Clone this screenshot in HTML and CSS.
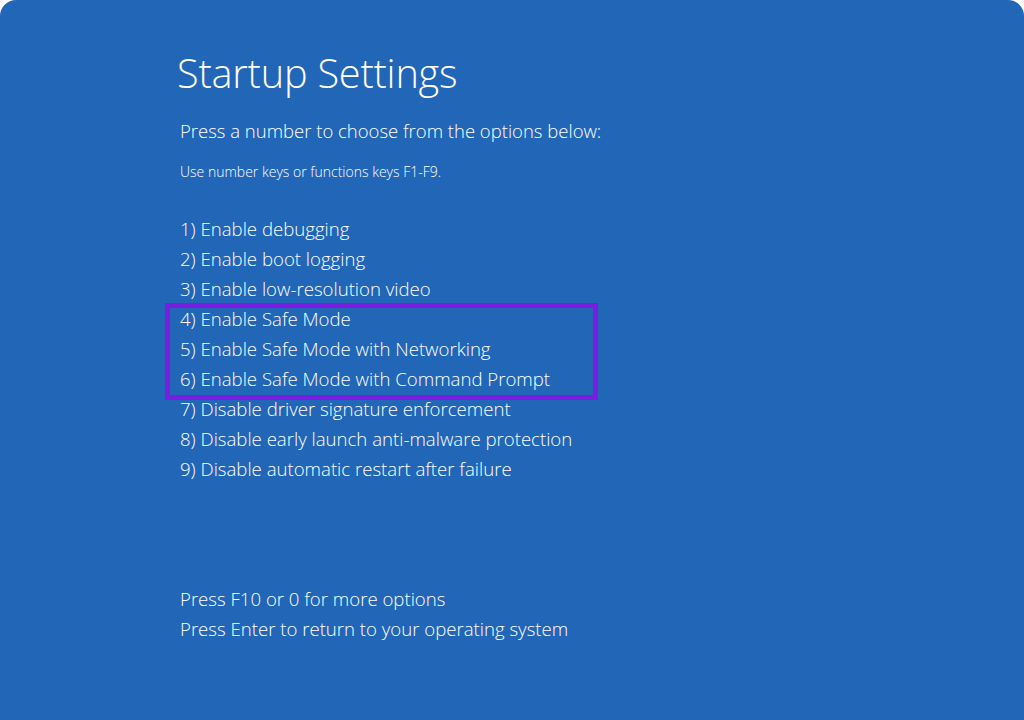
FILE: index.html
```html
<!DOCTYPE html>
<html>
<head>
<meta charset="utf-8">
<link rel="stylesheet" href="styles.css">
</head>
<body>
<div class="screen">
  <h1 class="title">Startup Settings</h1>
  <p class="lead">Press a number to choose from the options below:</p>
  <p class="hint">Use number keys or functions keys F1-F9.</p>
  <ul class="options">
    <li>1) Enable debugging</li>
    <li>2) Enable boot logging</li>
    <li>3) Enable low-resolution video</li>
    <li class="group">
      <ul class="highlight">
        <li>4) Enable Safe Mode</li>
        <li>5) Enable Safe Mode with Networking</li>
        <li>6) Enable Safe Mode with Command Prompt</li>
      </ul>
    </li>
    <li>7) Disable driver signature enforcement</li>
    <li>8) Disable early launch anti-malware protection</li>
    <li>9) Disable automatic restart after failure</li>
  </ul>
  <ul class="footer">
    <li>Press F10 or 0 for more options</li>
    <li>Press Enter to return to your operating system</li>
  </ul>
</div>
</body>
</html>
```

FILE: styles.css
```css
html, body {
  margin: 0;
  padding: 0;
  background: #ffffff;
}
.screen {
  width: 1024px;
  height: 720px;
  box-sizing: border-box;
  background: #2266b8;
  border-radius: 16px 16px 0 0;
  padding: 46px 0 0 177px;
  color: #ffffff;
  font-family: "Open Sans", "Noto Sans", sans-serif;
  font-weight: 300;
  overflow: hidden;
}
.title {
  margin: 0;
  font-size: 39.7px;
  font-weight: 300;
  line-height: 54px;
  letter-spacing: -0.2px;
}
.lead {
  margin: 16px 0 0 3px;
  font-size: 18.5px;
  line-height: 30px;
}
.hint {
  margin: 18px 0 0 3px;
  font-size: 14px;
  line-height: 16px;
}
.options, .footer, .highlight {
  list-style: none;
  margin: 0;
  padding: 0;
}
.options {
  margin: 34px 0 0 3px;
}
.options li, .footer li {
  font-size: 18.6px;
  line-height: 30px;
  white-space: nowrap;
}
.group {
  margin: -1px 0 -6px -15px;
}
.highlight {
  width: 413px;
  border: 5px solid #7a1ce2;
  padding: 0 0 1px 10px;
  margin: 0;
}
.highlight li:first-child {
  margin-top: -4px;
}
.footer {
  margin: 100px 0 0 3px;
}
```
